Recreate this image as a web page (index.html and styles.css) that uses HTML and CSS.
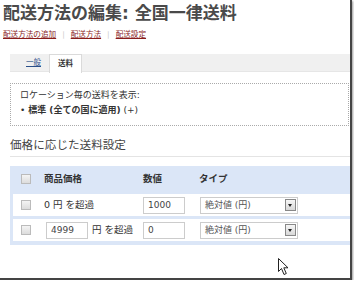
FILE: index.html
```html
<!DOCTYPE html>
<html lang="ja">
<head>
    <meta charset="UTF-8">
    <title>配送方法の編集</title>
    <link rel="stylesheet" href="styles.css">
</head>
<body>
    <div class="frame">
        <h1 class="title">配送方法の編集: 全国一律送料</h1>
        <div class="crumbs">
            <a href="#">配送方法の追加</a><span class="sep">|</span><a href="#">配送方法</a><span class="sep">|</span><a href="#">配送設定</a>
        </div>
        <div class="content">
            <div class="tabs">
                <a class="tab" href="#">一般</a>
                <span class="tab active">送料</span>
            </div>
            <div class="locations">
                <p>ロケーション毎の送料を表示:</p>
                <p>• <b>標準 (全ての国に適用)</b> (+)</p>
            </div>
            <h2 class="section">価格に応じた送料設定</h2>
            <div class="rates">
                <div class="row head">
                    <span class="cell"><span class="check"></span></span>
                    <span class="cell">商品価格</span>
                    <span class="cell">数値</span>
                    <span class="cell">タイプ</span>
                </div>
                <div class="row">
                    <span class="cell"><span class="check"></span></span>
                    <span class="cell">0 円 を超過</span>
                    <span class="cell"><input class="field" type="text" value="1000"></span>
                    <span class="cell">
                        <span class="select"><span>絶対値 (円)</span><span class="drop"></span></span>
                    </span>
                </div>
                <div class="row">
                    <span class="cell"><span class="check"></span></span>
                    <span class="cell"><input class="field small" type="text" value="4999"> 円 を超過</span>
                    <span class="cell"><input class="field" type="text" value="0"></span>
                    <span class="cell">
                        <span class="select"><span>絶対値 (円)</span><span class="drop"></span></span>
                    </span>
                </div>
            </div>
        </div>
        <svg class="cursor" width="12" height="18" viewBox="0 0 12 18">
            <path d="M0.5 0.5 L0.5 13.5 L3.5 10.5 L6 16.5 L8.3 15.5 L5.8 9.8 L10 9.8 Z" fill="#fff" stroke="#222" stroke-width="1" stroke-linejoin="round"/>
        </svg>
    </div>
</body>
</html>
```

FILE: styles.css
```css
body {
    margin: 0;
    background: #fff;
    font-family: "DejaVu Sans", "Noto Sans CJK JP", sans-serif;
    color: #333;
}
.frame {
    position: relative;
    width: 350px;
    height: 278px;
    overflow: hidden;
    border-right: 2px solid #444;
    border-bottom: 2px solid #444;
    box-shadow: 1px 1px 2px rgba(0, 0, 0, 0.4);
}
.title {
    margin: 0;
    padding: 3px 0 0 3px;
    font-size: 17px;
    line-height: 20px;
    font-weight: bold;
    color: #4a4a4a;
    white-space: nowrap;
}
.crumbs {
    margin-top: 7px;
    padding-left: 3px;
    font-size: 7.6px;
    line-height: 10px;
    white-space: nowrap;
}
.crumbs a {
    color: #8a1c1c;
}
.sep {
    margin: 0 6px;
    color: #ccc;
}
.content {
    margin-left: 10px;
}
.tabs {
    display: flex;
    margin-top: 14px;
    padding-left: 8px;
    height: 17px;
    background: #f0f0f0;
    border-bottom: 1px solid #e6e6e6;
}
.tab {
    width: 31px;
    text-align: center;
    font-size: 7.5px;
    line-height: 17px;
    color: #2a4f8a;
}
.tab.active {
    width: 31px;
    height: 18px;
    background: #fff;
    border: 1px solid #dadada;
    border-bottom: none;
    font-weight: bold;
    color: #333;
}
.locations {
    margin-top: 11px;
    padding: 4px 0 7px 9px;
    border: 1px dotted #aaa;
    border-right: 1px dotted #aaa;
    margin-right: 1px;
    font-size: 9px;
    line-height: 15px;
}
.locations p {
    margin: 0;
}
.section {
    margin: 11px 0 0;
    padding-bottom: 3px;
    border-bottom: 1px solid #e4e4e4;
    font-size: 11.6px;
    font-weight: normal;
    line-height: 16px;
    color: #444;
}
.rates {
    margin-top: 9px;
    padding: 0 0 4px 3px;
    background: #dbe6f7;
    display: flex;
    flex-direction: column;
    gap: 3px;
}
.row {
    display: grid;
    grid-template-columns: 31px 99px 56px auto;
    align-items: center;
    height: 22px;
    background: #fff;
    font-size: 9.5px;
    line-height: 12px;
    white-space: nowrap;
}
.row.head {
    height: 24px;
    padding-top: 1px;
    background: transparent;
    font-weight: bold;
}
.cell {
    display: flex;
    align-items: center;
}
.check {
    width: 8px;
    height: 8px;
    margin-left: 8px;
    border: 1px solid #bbb;
    background: linear-gradient(#f4f4f4, #dcdcdc);
}
.field {
    box-sizing: border-box;
    width: 42px;
    height: 17px;
    margin: 0 4px 0 0;
    padding: 0 4px;
    border: 1px solid #ccc;
    font-family: "DejaVu Sans", sans-serif;
    font-size: 9px;
    color: #444;
}
.field.small {
    margin-left: 2px;
}
.select {
    box-sizing: border-box;
    display: flex;
    align-items: center;
    justify-content: space-between;
    width: 98px;
    height: 17px;
    margin-left: 1px;
    padding: 0 1px 0 4px;
    border: 1px solid #ccc;
    font-size: 9px;
    color: #555;
}
.drop {
    position: relative;
    width: 9px;
    height: 10px;
    border: 1px solid #888;
    background: linear-gradient(#f6f6f6, #d8d8d8);
}
.drop::after {
    content: "";
    position: absolute;
    left: 2px;
    top: 4px;
    border-left: 2.5px solid transparent;
    border-right: 2.5px solid transparent;
    border-top: 3px solid #222;
}
.cursor {
    position: absolute;
    left: 278px;
    top: 258px;
}
```
